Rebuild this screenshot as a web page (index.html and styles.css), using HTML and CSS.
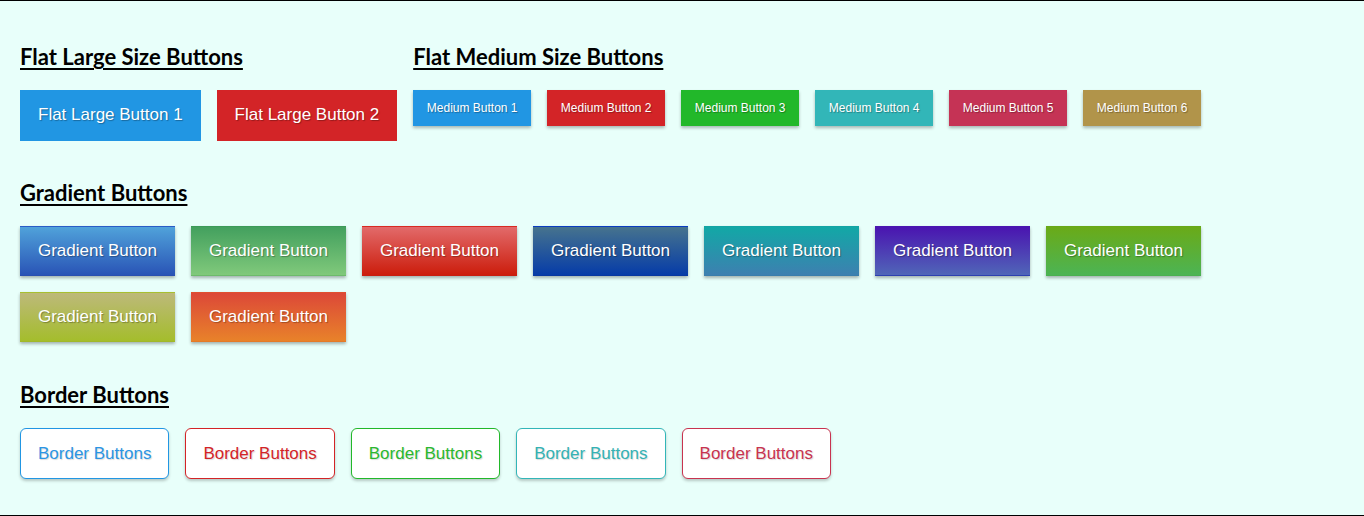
FILE: index.html
```html
<!DOCTYPE html>
<html lang="en">
<head>
<meta charset="utf-8">
<title>Buttons</title>
<link rel="stylesheet" href="styles.css">
</head>
<body>
<div class="page">
  <div class="top-row">
    <section class="section">
      <h2 class="heading">Flat Large Size Buttons</h2>
      <div class="btn-row">
        <button class="btn btn-large flat-blue">Flat Large Button 1</button>
        <button class="btn btn-large flat-red">Flat Large Button 2</button>
      </div>
    </section>
    <section class="section">
      <h2 class="heading">Flat Medium Size Buttons</h2>
      <div class="btn-row">
        <button class="btn btn-medium flat-blue">Medium Button 1</button>
        <button class="btn btn-medium flat-red">Medium Button 2</button>
        <button class="btn btn-medium flat-green">Medium Button 3</button>
        <button class="btn btn-medium flat-teal">Medium Button 4</button>
        <button class="btn btn-medium flat-crimson">Medium Button 5</button>
        <button class="btn btn-medium flat-gold">Medium Button 6</button>
      </div>
    </section>
  </div>

  <section class="section section-gradient">
    <h2 class="heading">Gradient Buttons</h2>
    <div class="btn-row">
      <button class="btn btn-grad grad-1">Gradient Button</button>
      <button class="btn btn-grad grad-2">Gradient Button</button>
      <button class="btn btn-grad grad-3">Gradient Button</button>
      <button class="btn btn-grad grad-4">Gradient Button</button>
      <button class="btn btn-grad grad-5">Gradient Button</button>
      <button class="btn btn-grad grad-6">Gradient Button</button>
      <button class="btn btn-grad grad-7">Gradient Button</button>
      <button class="btn btn-grad grad-8">Gradient Button</button>
      <button class="btn btn-grad grad-9">Gradient Button</button>
    </div>
  </section>

  <section class="section section-border">
    <h2 class="heading">Border Buttons</h2>
    <div class="btn-row">
      <button class="btn btn-border bd-blue">Border Buttons</button>
      <button class="btn btn-border bd-red">Border Buttons</button>
      <button class="btn btn-border bd-green">Border Buttons</button>
      <button class="btn btn-border bd-teal">Border Buttons</button>
      <button class="btn btn-border bd-crimson">Border Buttons</button>
    </div>
  </section>
</div>
</body>
</html>
```
FILE: styles.css
```css
* { box-sizing: border-box; }

html, body {
  margin: 0;
  padding: 0;
  background: #e8fffa;
}

.page {
  height: 516px;
  border-top: 1px solid #000;
  border-bottom: 1px solid #000;
  background: #e8fffa;
  padding: 41px 20px 0;
  overflow: hidden;
}

.top-row {
  display: flex;
  gap: 16px;
}

.heading {
  margin: 0 0 20px;
  padding-top: 2px;
  font-family: "Lato", "Open Sans", sans-serif;
  font-weight: 700;
  font-size: 22px;
  line-height: 26px;
  color: #000;
  text-decoration: underline;
  text-decoration-thickness: 2px;
  text-underline-offset: 3px;
  display: table;
}

.section-gradient { margin-top: 37px; }
.section-border { margin-top: 38px; }

.btn-row {
  display: flex;
  flex-wrap: wrap;
  gap: 16px;
}

.btn {
  display: flex;
  align-items: center;
  justify-content: center;
  border: 0;
  margin: 0;
  color: #fff;
  font-family: "Liberation Sans", Arial, sans-serif;
  white-space: nowrap;
  text-shadow: 1px 1px 1px rgba(0, 0, 0, 0.3);
  cursor: pointer;
}

.btn-large {
  height: 51px;
  padding: 0 18px 2px;
  font-size: 17px;
}

.btn-medium {
  height: 36px;
  width: 118px;
  padding: 0;
  font-size: 12px;
  box-shadow: 0 2px 3px rgba(0, 0, 0, 0.28);
}

.flat-blue { background: #2196e3; }
.flat-red { background: #d32427; }
.flat-green { background: #22b82a; }
.flat-teal { background: #32b6b8; }
.flat-crimson { background: #c53355; }
.flat-gold { background: #b1944a; }

.btn-grad {
  height: 50px;
  width: 155px;
  padding: 0;
  font-size: 17px;
  border-top: 1px solid transparent;
  border-bottom: 1px solid transparent;
  box-shadow: 0 2px 3px rgba(0, 0, 0, 0.3);
}

.grad-1 { background: linear-gradient(#50a2da, #2954b6); border-top-color: #2a5cc6; border-bottom-color: #2a50b0; }
.grad-2 { background: linear-gradient(#43a05e, #80c97b); border-top-color: #3c9a58; border-bottom-color: #6dba6c; }
.grad-3 { background: linear-gradient(#e26a6a, #cc1d0c); border-top-color: #d82a22; border-bottom-color: #c81e10; }
.grad-4 { background: linear-gradient(#46738e, #063ca8); border-top-color: #0a3cc0; border-bottom-color: #0838a0; }
.grad-5 { background: linear-gradient(#12a8a6, #3d80b0); border-top-color: #14a4a4; border-bottom-color: #3a7eac; }
.grad-6 { background: linear-gradient(#4a14b0, #5066b8); border-top-color: #4a16b0; border-bottom-color: #2e40b0; }
.grad-7 { background: linear-gradient(#6aaa18, #4cb454); border-top-color: #68a818; border-bottom-color: #4ab050; }
.grad-8 { background: linear-gradient(#bdb97a, #a4bd2c); border-top-color: #a8c030; border-bottom-color: #a0b82a; }
.grad-9 { background: linear-gradient(#dc4838, #e8822a); border-top-color: #e05030; border-bottom-color: #e47a28; }

.btn-border {
  height: 51px;
  width: 149.4px;
  padding: 0;
  font-size: 17px;
  background: #fff;
  border: 1px solid;
  border-radius: 6px;
  box-shadow: 0 2px 3px rgba(0, 0, 0, 0.22);
  text-shadow: 1px 1px 1px rgba(0, 0, 0, 0.15);
}

.bd-blue { color: #2b95e4; border-color: #2196e3; }
.bd-red { color: #d32427; border-color: #d32427; }
.bd-green { color: #2bb82f; border-color: #22b82a; }
.bd-teal { color: #34b2b4; border-color: #32b6b8; }
.bd-crimson { color: #c8334f; border-color: #c8334f; }
```
